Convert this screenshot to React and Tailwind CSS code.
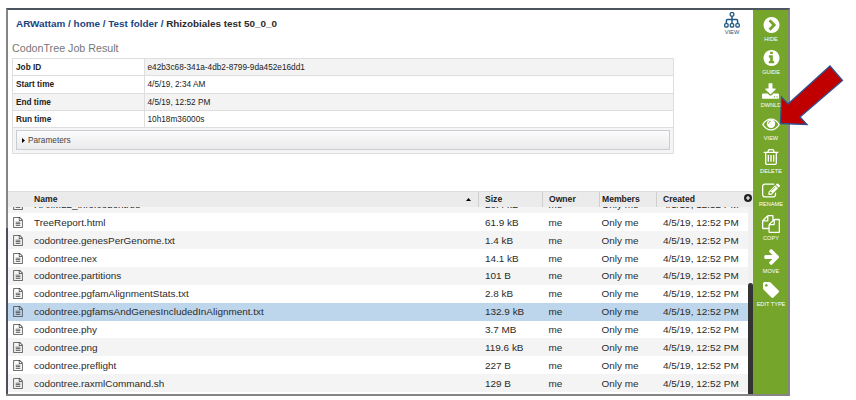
const paths = {
  hide: "M845 1395l454-454q19-19 19-45t-19-45l-454-454q-19-19-45-19t-45 19l-102 102q-19 19-19 45t19 45l307 307-307 307q-19 19-19 45t19 45l102 102q19 19 45 19t45-19zm819-499q0 209-103 385.5t-279.5 279.5-385.5 103-385.5-103-279.5-279.5-103-385.5 103-385.5 279.5-279.5 385.5-103 385.5 103 279.5 279.5 103 385.5z",
  info: "M1152 1376v-160q0-14-9-23t-23-9h-96v-512q0-14-9-23t-23-9h-320q-14 0-23 9t-9 23v160q0 14 9 23t23 9h96v320h-96q-14 0-23 9t-9 23v160q0 14 9 23t23 9h448q14 0 23-9t9-23zm-128-896v-160q0-14-9-23t-23-9h-192q-14 0-23 9t-9 23v160q0 14 9 23t23 9h192q14 0 23-9t9-23zm640 416q0 209-103 385.5t-279.5 279.5-385.5 103-385.5-103-279.5-279.5-103-385.5 103-385.5 279.5-279.5 385.5-103 385.5 103 279.5 279.5 103 385.5z",
  download: "M1344 1344q0-26-19-45t-45-19-45 19-19 45 19 45 45 19 45-19 19-45zm256 0q0-26-19-45t-45-19-45 19-19 45 19 45 45 19 45-19 19-45zm128-224v320q0 40-28 68t-68 28h-1472q-40 0-68-28t-28-68v-320q0-40 28-68t68-28h465l135 136q58 56 136 56t136-56l136-136h464q40 0 68 28t28 68zm-325-569q17 41-14 70l-448 448q-18 19-45 19t-45-19l-448-448q-31-29-14-70 17-39 59-39h256v-448q0-26 19-45t45-19h256q26 0 45 19t19 45v448h256q42 0 59 39z",
  trash: "M704 736v576q0 14-9 23t-23 9h-64q-14 0-23-9t-9-23v-576q0-14 9-23t23-9h64q14 0 23 9t9 23zm256 0v576q0 14-9 23t-23 9h-64q-14 0-23-9t-9-23v-576q0-14 9-23t23-9h64q14 0 23 9t9 23zm256 0v576q0 14-9 23t-23 9h-64q-14 0-23-9t-9-23v-576q0-14 9-23t23-9h64q14 0 23 9t9 23zm128 724v-948h-896v948q0 22 7 40.5t14.5 27 10.5 8.5h832q3 0 10.5-8.5t14.5-27 7-40.5zm-672-1076h448l-48-117q-7-9-17-11h-317q-10 2-17 11zm928 32v64q0 14-9 23t-23 9h-96v948q0 83-47 143.5t-113 60.5h-832q-66 0-113-58.5t-47-141.5v-952h-96q-14 0-23-9t-9-23v-64q0-14 9-23t23-9h309l70-167q15-37 54-63t79-26h320q40 0 79 26t54 63l70 167h309q14 0 23 9t9 23z",
  edit: "M888 1184l116-116-152-152-116 116v56h96v96h56zm440-720q-16-16-33 1l-350 350q-17 17-1 33t33-1l350-350q17-17 1-33zm80 594v190q0 119-84.5 203.5t-203.5 84.5h-832q-119 0-203.5-84.5t-84.5-203.5v-832q0-119 84.5-203.5t203.5-84.5h832q63 0 117 25 15 7 18 23 3 17-9 29l-49 49q-14 14-32 8-23-6-45-6h-832q-66 0-113 47t-47 113v832q0 66 47 113t113 47h832q66 0 113-47t47-113v-126q0-13 9-22l64-64q15-15 35-7t20 29zm-96-738l288 288-672 672h-288v-288zm444 132l-92 92-288-288 92-92q28-28 68-28t68 28l152 152q28 28 28 68t-28 68z",
  copy: "M1696 384q40 0 68 28t28 68v1216q0 40-28 68t-68 28h-960q-40 0-68-28t-28-68v-288h-544q-40 0-68-28t-28-68v-672q0-40 20-88t48-76l408-408q28-28 76-48t88-20h416q40 0 68 28t28 68v328q68-40 128-40h416zm-544 213l-299 299h299v-299zm-640-384l-299 299h299v-299zm196 647l316-316v-416h-384v416q0 40-28 68t-68 28h-416v640h512v-256q0-40 20-88t48-76zm956 804v-1152h-384v416q0 40-28 68t-68 28h-416v640h896z",
  move: "M1600 960q0 54-37 91l-651 651q-39 37-91 37-51 0-90-37l-75-75q-38-38-38-91t38-91l293-293h-704q-52 0-84.5-37.5t-32.5-90.5v-128q0-53 32.5-90.5t84.5-37.5h704l-293-294q-38-36-38-90t38-90l75-75q38-38 90-38 53 0 91 38l651 651q37 35 37 90z",
  tag: "M576 448q0-53-37.5-90.5t-90.5-37.5-90.5 37.5-37.5 90.5 37.5 90.5 90.5 37.5 90.5-37.5 37.5-90.5zm1067 576q0 53-37 90l-491 492q-39 37-91 37-53 0-90-37l-715-716q-38-37-64.5-101t-26.5-117v-416q0-52 38-90t90-38h416q53 0 117 26.5t102 64.5l715 714q37 39 37 91z",
  file: "M1596 380q28 28 48 76t20 88v1152q0 40-28 68t-68 28h-1344q-40 0-68-28t-28-68v-1600q0-40 28-68t68-28h896q40 0 88 20t76 48zm-444-244v376h376q-10-29-22-41l-313-313q-12-12-41-22zm384 1528v-1024h-416q-40 0-68-28t-28-68v-416h-768v1536h1280zm-1024-864q0-14 9-23t23-9h704q14 0 23 9t9 23v64q0 14-9 23t-23 9h-704q-14 0-23-9t-9-23v-64zm736 224q14 0 23 9t9 23v64q0 14-9 23t-23 9h-704q-14 0-23-9t-9-23v-64q0-14 9-23t23-9h704zm0 256q14 0 23 9t9 23v64q0 14-9 23t-23 9h-704q-14 0-23-9t-9-23v-64q0-14 9-23t23-9h704z",
};

const tools = [
  ["HIDE", "hide", "128 128 1536 1536"],
  ["GUIDE", "info", "128 128 1536 1536"],
  ["DWNLD", "download", "64 0 1664 1536"],
  ["VIEW", "eye", ""],
  ["DELETE", "trash", "192 128 1408 1536"],
  ["RENAME", "edit", "0 128 1792 1408"],
  ["COPY", "copy", "0 0 1792 1792"],
  ["MOVE", "move", "0 181 1600 1558"],
  ["EDIT TYPE", "tag", "128 128 1515 1515"],
];

const files = [
  ["RAxML2_info.codontree", "20.4 kB"],
  ["TreeReport.html", "61.9 kB"],
  ["codontree.genesPerGenome.txt", "1.4 kB"],
  ["codontree.nex", "14.1 kB"],
  ["codontree.partitions", "101 B"],
  ["codontree.pgfamAlignmentStats.txt", "2.8 kB"],
  ["codontree.pgfamsAndGenesIncludedInAlignment.txt", "132.9 kB"],
  ["codontree.phy", "3.7 MB"],
  ["codontree.png", "119.6 kB"],
  ["codontree.preflight", "227 B"],
  ["codontree.raxmlCommand.sh", "129 B"],
];

const details = [
  ["Job ID", "e42b3c68-341a-4db2-8799-9da452e16dd1"],
  ["Start time", "4/5/19, 2:34 AM"],
  ["End time", "4/5/19, 12:52 PM"],
  ["Run time", "10h18m36000s"],
];

const columns = "grid grid-cols-[26px_444px_64px_57px_57px_1fr]";

function ToolIcon({ name, box }) {
  if (name === "eye") {
    return (
      <svg className="h-[13px] w-[18px]" viewBox="0 0 18 13">
        <path d="M.8 6.5Q4 1.1 9 1.1t8.2 5.4Q14 11.9 9 11.9T.8 6.5z" fill="none" stroke="white" strokeWidth="1.4" />
        <circle cx="9" cy="5.7" r="4.2" fill="white" />
        <path d="M6.5 5.7A2.5 2.5 0 0 1 9 3.2" fill="none" stroke="#76a52c" strokeWidth=".8" />
      </svg>
    );
  }
  const size = name === "trash" || name === "move" || name === "tag" ? "h-[16px] w-[16px]" : name === "copy" ? "h-[18px] w-[18px]" : name === "edit" ? "h-[15px] w-[18px]" : "h-[16px] w-[17px]";
  return (
    <svg className={size} viewBox={box} fill="white">
      <path d={paths[name]} />
    </svg>
  );
}

function Toolbar() {
  return (
    <aside className="flex w-[35px] shrink-0 flex-col items-center bg-[#76a52c] pt-[6px] pl-[1px]">
      {tools.map(([label, icon, box]) => (
        <div key={label} className="flex h-[33.1px] shrink-0 flex-col items-center">
          <div className="flex h-[18px] items-center"><ToolIcon name={icon} box={box} /></div>
          <span className="mt-[2px] text-[5.6px] leading-[7px] whitespace-nowrap text-white">{label}</span>
        </div>
      ))}
    </aside>
  );
}

function JobDetails() {
  return (
    <div className="ml-[4px] w-[662px] border border-[#dedede] text-[8.25px] leading-[17px] text-[#222]">
      {details.map(([label, value], i) => (
        <div key={label} className={`flex h-[17.25px] border-b border-[#dedede] ${i % 2 ? "bg-white" : "bg-[#f3f3f3]"}`}>
          <b className={`w-[132px] border-r border-[#dedede] pl-[3px] ${i === 0 ? "bg-white" : ""}`}>{label}</b>
          <span className="pl-[2.5px]">{value}</span>
        </div>
      ))}
      <div className="h-[25px] bg-[#f5f5f5] px-[3px] pt-[2px]">
        <div className="flex h-[20px] items-center border border-[#c9ced6] bg-linear-to-b from-[#fbfbfb] to-[#ebebeb] pl-[5px] text-[#444]">
          <svg className="mr-[3px] h-[5px] w-[3px]" viewBox="0 0 3 5"><path d="M0 0l3 2.5L0 5z" /></svg>
          <span className="pt-[1px]">Parameters</span>
        </div>
      </div>
    </div>
  );
}

function FileTable() {
  return (
    <section className="mt-[37px] flex min-h-0 flex-1 flex-col">
      <div className={`${columns} h-[16px] shrink-0 border-t border-[#ddd] bg-[#ebebeb] text-[8.6px] leading-[14px] font-bold text-[#222]`}>
        <span />
        <span className="flex justify-between pr-[5px]">Name
          <svg className="mt-[6px] mr-[2px] h-[3px] w-[5px]" viewBox="0 0 5 3"><path d="M0 3l2.5-3L5 3z" /></svg>
        </span>
        <span className="border-l border-[#d0d0d0] pl-[6px]">Size</span>
        <span className="border-l border-[#d0d0d0] pl-[6px]">Owner</span>
        <span className="border-l border-[#d0d0d0] pl-[2px]">Members</span>
        <span className="flex justify-between border-l border-[#d0d0d0] pl-[6px]">Created
          <svg className="mt-[2px] mr-[1px] h-[8px] w-[8px]" viewBox="0 0 8 8"><circle cx="4" cy="4" r="4" fill="#222" /><path d="M4 2v4M2 4h4" stroke="white" strokeWidth="1.2" /></svg>
        </span>
      </div>
      <div className="flex min-h-0 flex-1">
        <div className="flex min-w-0 flex-1 flex-col justify-end overflow-hidden pb-[2px] text-[9.95px] text-[#2b2b2b]">
          {files.map(([name, size], i) => (
            <div key={name} className={`${columns} h-[17.87px] shrink-0 items-center leading-[17px] ${i === 6 ? "bg-[#bed6ec]" : i % 2 ? "bg-white" : "bg-[#f4f4f4]"}`}>
              <svg className="ml-[5px] h-[11px] w-[10px]" viewBox="128 0 1536 1792" fill="#444"><path d={paths.file} /></svg>
              <span>{name}</span>
              <span className="pl-[7px]">{size}</span>
              <span className="pl-[6.5px]">me</span>
              <span className="pl-[2.5px]">Only me</span>
              <span className="pl-[7px] whitespace-nowrap">4/5/19, 12:52 PM</span>
            </div>
          ))}
        </div>
        <div className="w-[5px] bg-[#f0f0f0] pt-[76px]"><div className="h-full rounded-t-sm bg-[#333]" /></div>
      </div>
    </section>
  );
}

export default function App() {
  return (
    <div className="relative h-[400px] w-[856px] overflow-hidden bg-white pt-[8px] pl-[6px] font-['Liberation_Sans',sans-serif]">
      <div className="flex h-[388px] w-[784px] border-2 border-[#858585] border-t-[#4c5560]">
        <main className="flex min-w-0 flex-1 flex-col">
          <header className="flex h-[31px] shrink-0 justify-between">
            <div className="pt-[6px] pl-[8px] text-[9.88px] leading-[16px] font-bold text-[#17457f]">
              ARWattam / home / Test folder / <span className="text-[#2b2b2b]">Rhizobiales test 50_0_0</span>
            </div>
            <div className="mr-[13px] flex flex-col items-center pt-[2px] text-[#235a83]">
              <svg className="h-[16px] w-[16px]" viewBox="0 0 16 16" fill="none" stroke="currentColor" strokeWidth="1.3">
                <rect x="6.2" y=".7" width="3.6" height="3.4" rx="1" />
                <path d="M8 4v7.5M2.4 11.5V8.5q0-1 1-1h9.2q1 0 1 1v3" strokeWidth="1.5" />
                <rect x=".7" y="11.6" width="3.4" height="3.4" rx="1" />
                <rect x="6.3" y="11.6" width="3.4" height="3.4" rx="1" />
                <rect x="11.9" y="11.6" width="3.4" height="3.4" rx="1" />
              </svg>
              <span className="mt-[1px] text-[5.7px] leading-[7px]">VIEW</span>
            </div>
          </header>
          <h1 className="h-[17px] shrink-0 pl-[4px] text-[10.7px] leading-[15px] text-[#777]">CodonTree Job Result</h1>
          <JobDetails />
          <FileTable />
        </main>
        <Toolbar />
      </div>
      <div className="absolute top-[228px] left-[6px] h-[166px] w-[2px] bg-[#4a4e5e]" />
      <svg className="absolute top-[64px] left-[778px] h-[64px] w-[68px]" viewBox="778 64 68 64">
        <path d="M780.5 123.5L781.5 97l6.5 7L830 66l12.5 14.5L800 117l7 7.5z" fill="#c00000" stroke="#2f528f" strokeWidth="1.3" />
      </svg>
    </div>
  );
}
